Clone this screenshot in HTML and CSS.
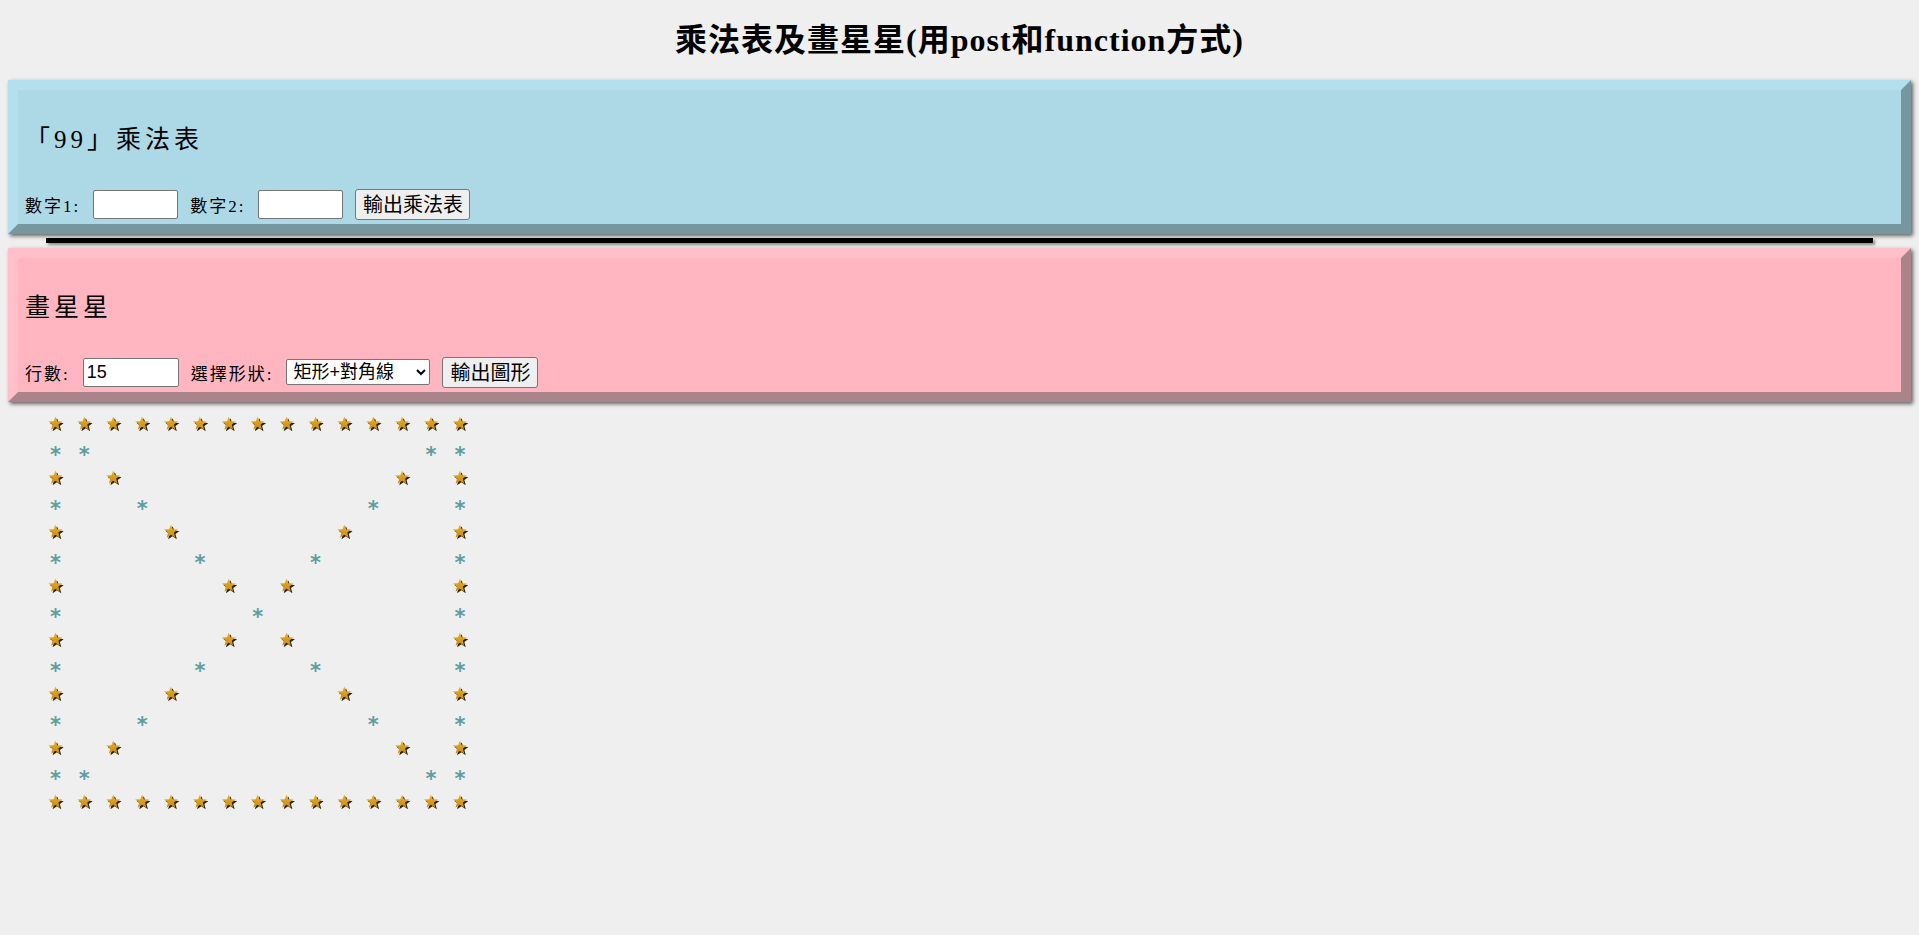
FILE: index.html
```html
<!DOCTYPE html>
<html lang="zh-Hant">
<head>
<meta charset="utf-8">
<title>乘法表及畫星星</title>
<link rel="stylesheet" href="styles.css">
</head>
<body>
<h1 class="title">乘法表及畫星星(用post和function方式)</h1>

<section class="panel panel-blue">
  <h2 class="panel-title">「99」乘法表</h2>
  <form class="form-row">
    <label class="lbl">數字1:</label>
    <input class="field field-num" type="text">
    <label class="lbl">數字2:</label>
    <input class="field field-num" type="text">
    <button class="btn btn-a" type="button">輸出乘法表</button>
  </form>
</section>

<hr class="divider">

<section class="panel panel-pink">
  <h2 class="panel-title">畫星星</h2>
  <form class="form-row">
    <label class="lbl">行數:</label>
    <input class="field field-rows" type="text" value="15">
    <label class="lbl">選擇形狀:</label>
    <select class="field field-shape">
      <option>矩形+對角線</option>
    </select>
    <button class="btn btn-b" type="button">輸出圖形</button>
  </form>
</section>

<div class="stars">
  <div class="srow"><b class="g"></b><b class="g"></b><b class="g"></b><b class="g"></b><b class="g"></b><b class="g"></b><b class="g"></b><b class="g"></b><b class="g"></b><b class="g"></b><b class="g"></b><b class="g"></b><b class="g"></b><b class="g"></b><b class="g"></b></div>
  <div class="srow"><b class="t">*</b><b class="t">*</b><b></b><b></b><b></b><b></b><b></b><b></b><b></b><b></b><b></b><b></b><b></b><b class="t">*</b><b class="t">*</b></div>
  <div class="srow"><b class="g"></b><b></b><b class="g"></b><b></b><b></b><b></b><b></b><b></b><b></b><b></b><b></b><b></b><b class="g"></b><b></b><b class="g"></b></div>
  <div class="srow"><b class="t">*</b><b></b><b></b><b class="t">*</b><b></b><b></b><b></b><b></b><b></b><b></b><b></b><b class="t">*</b><b></b><b></b><b class="t">*</b></div>
  <div class="srow"><b class="g"></b><b></b><b></b><b></b><b class="g"></b><b></b><b></b><b></b><b></b><b></b><b class="g"></b><b></b><b></b><b></b><b class="g"></b></div>
  <div class="srow"><b class="t">*</b><b></b><b></b><b></b><b></b><b class="t">*</b><b></b><b></b><b></b><b class="t">*</b><b></b><b></b><b></b><b></b><b class="t">*</b></div>
  <div class="srow"><b class="g"></b><b></b><b></b><b></b><b></b><b></b><b class="g"></b><b></b><b class="g"></b><b></b><b></b><b></b><b></b><b></b><b class="g"></b></div>
  <div class="srow"><b class="t">*</b><b></b><b></b><b></b><b></b><b></b><b></b><b class="t">*</b><b></b><b></b><b></b><b></b><b></b><b></b><b class="t">*</b></div>
  <div class="srow"><b class="g"></b><b></b><b></b><b></b><b></b><b></b><b class="g"></b><b></b><b class="g"></b><b></b><b></b><b></b><b></b><b></b><b class="g"></b></div>
  <div class="srow"><b class="t">*</b><b></b><b></b><b></b><b></b><b class="t">*</b><b></b><b></b><b></b><b class="t">*</b><b></b><b></b><b></b><b></b><b class="t">*</b></div>
  <div class="srow"><b class="g"></b><b></b><b></b><b></b><b class="g"></b><b></b><b></b><b></b><b></b><b></b><b class="g"></b><b></b><b></b><b></b><b class="g"></b></div>
  <div class="srow"><b class="t">*</b><b></b><b></b><b class="t">*</b><b></b><b></b><b></b><b></b><b></b><b></b><b></b><b class="t">*</b><b></b><b></b><b class="t">*</b></div>
  <div class="srow"><b class="g"></b><b></b><b class="g"></b><b></b><b></b><b></b><b></b><b></b><b></b><b></b><b></b><b></b><b class="g"></b><b></b><b class="g"></b></div>
  <div class="srow"><b class="t">*</b><b class="t">*</b><b></b><b></b><b></b><b></b><b></b><b></b><b></b><b></b><b></b><b></b><b></b><b class="t">*</b><b class="t">*</b></div>
  <div class="srow"><b class="g"></b><b class="g"></b><b class="g"></b><b class="g"></b><b class="g"></b><b class="g"></b><b class="g"></b><b class="g"></b><b class="g"></b><b class="g"></b><b class="g"></b><b class="g"></b><b class="g"></b><b class="g"></b><b class="g"></b></div>
</div>
</body>
</html>
```

FILE: styles.css
```css
html, body {
  margin: 0;
  padding: 0;
}
body {
  background: #efefef;
  padding: 0 8px;
  font-family: "Liberation Serif", "Noto Sans CJK TC", serif;
  color: #000;
}

.title {
  margin: 0;
  padding: 20px 0 20px;
  line-height: 40px;
  font-size: 32px;
  font-weight: bold;
  text-align: center;
  letter-spacing: 1px;
}

.panel {
  border-width: 10px;
  border-style: solid;
  padding: 0 7px 4px;
  box-shadow: 2px 2px 4px rgba(0, 0, 0, 0.6);
}
.panel-blue {
  background: #add8e6;
  border-color: #b3e0ec #7797a0 #7797a0 #b3e0ec;
}
.panel-pink {
  background: #ffb6c1;
  border-color: #ffc0cb #aa838b #aa838b #ffc0cb;
}

.panel-title {
  margin: 32px 0 30px;
  font-size: 25px;
  line-height: 36px;
  font-weight: normal;
  letter-spacing: 4px;
}

.form-row {
  display: flex;
  align-items: center;
  height: 32px;
  margin: 0;
}

.lbl {
  font-size: 17px;
  letter-spacing: 2px;
  margin-right: 13px;
}

.field {
  box-sizing: border-box;
  background: #fff;
  border: 1px solid #767676;
  border-radius: 2px;
  font-family: "Liberation Sans", "Noto Sans CJK TC", sans-serif;
  margin: 0 12px 0 0;
  padding: 1px 3px;
}
.field-num {
  width: 85px;
  height: 29px;
  font-size: 16px;
}
.field-rows {
  width: 96px;
  height: 29px;
  font-size: 18px;
}
.field-shape {
  width: 144px;
  height: 26px;
  font-size: 18px;
  padding: 0 2px;
}

.btn {
  box-sizing: border-box;
  height: 31px;
  padding: 0 6px;
  background: #efefef;
  border: 1px solid #767676;
  border-radius: 3px;
  font-family: "Noto Sans CJK TC", sans-serif;
  font-size: 20px;
  line-height: 1;
  color: #000;
}
.btn-a { width: 115px; }
.btn-b { width: 96px; }

.divider {
  width: 96%;
  height: 5px;
  margin: 4px auto 5px;
  border: 0;
  background: #000;
  box-shadow: 2px 2px 3px #888;
}

.stars {
  margin: 8px 0 0 33px;
}
.srow {
  display: flex;
  height: 27px;
}
.srow b {
  position: relative;
  display: flex;
  justify-content: center;
  width: 28.9px;
  height: 27px;
  flex: none;
}
.t {
  color: #5f9ea0;
  font-family: "DejaVu Sans", sans-serif;
  font-weight: bold;
  font-size: 21px;
  line-height: 27px;
  transform: translateY(5px);
}
.g::before,
.g::after {
  content: "";
  position: absolute;
  left: 50%;
  top: 50%;
  width: 14px;
  height: 14px;
  margin: -7px 0 0 -7px;
  clip-path: polygon(50% 0%, 63% 34%, 100% 36%, 71% 58%, 81% 95%, 50% 74%, 19% 95%, 29% 58%, 0% 36%, 37% 34%);
}
.g::before {
  background: #2e2208;
  transform: translate(1.5px, 1.5px);
}
.g::after {
  background: linear-gradient(#eab02a, #c4860e);
}
```
